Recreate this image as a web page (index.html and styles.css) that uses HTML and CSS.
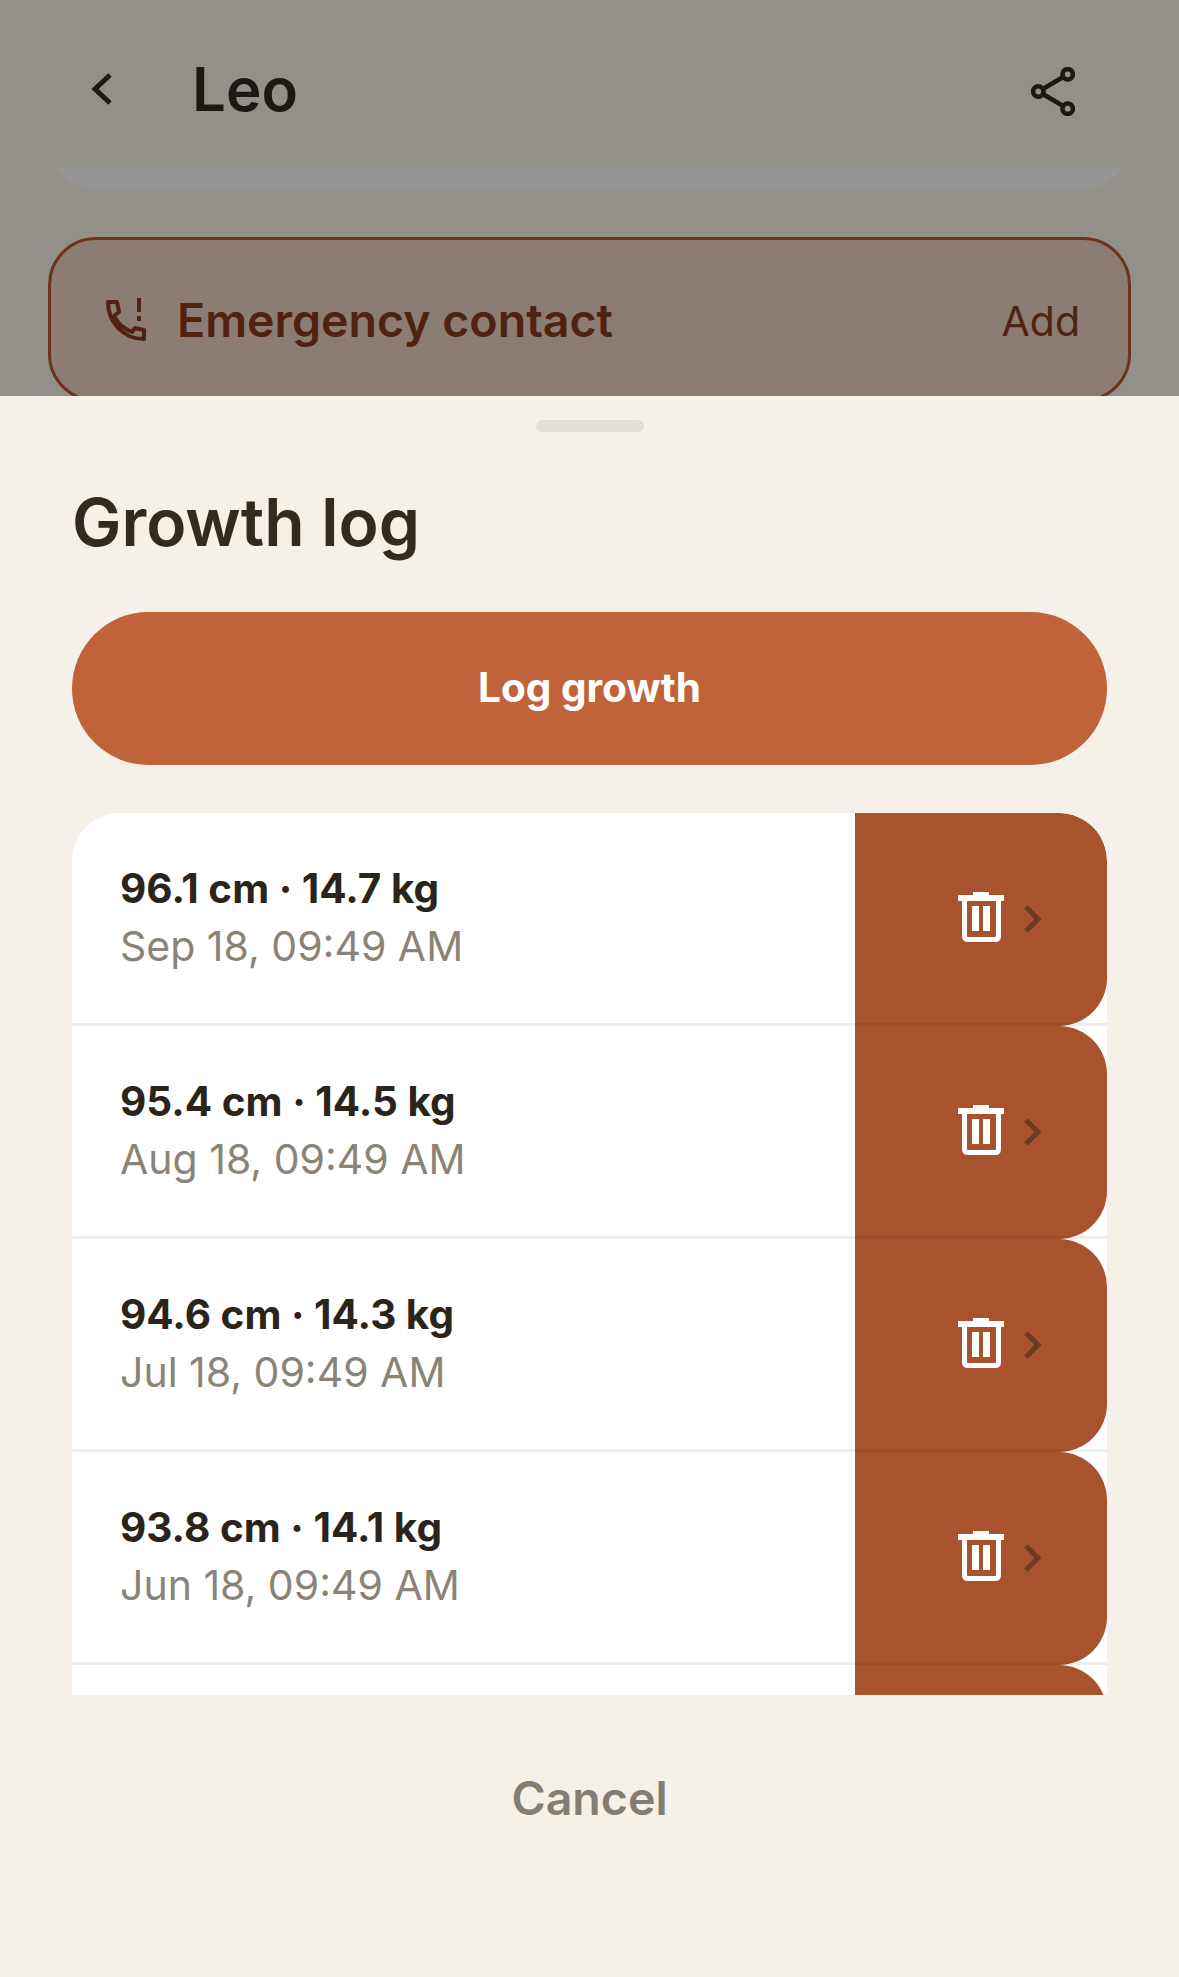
FILE: index.html
```html
<!DOCTYPE html>
<html>
<head>
  <meta charset="UTF-8" />
  <title>Growth log</title>
  <link rel="stylesheet" href="styles.css">
</head>
<body>

  <!-- Profile page behind the sheet -->
  <div class="page">
    <div class="top-bar">
      <svg class="back-icon" viewBox="0 0 24 36"><path d="M20 4 L5 18 L20 32" /></svg>
      <div class="page-title">Leo</div>
      <svg class="share-icon" viewBox="0 0 44 49">
        <path d="M11 22.5 L33 9.5 M11 26.5 L33 39.5" />
        <circle cx="7.3" cy="24.5" r="5.2" />
        <circle cx="36.7" cy="7.3" r="5.2" />
        <circle cx="36.7" cy="41.7" r="5.2" />
      </svg>
    </div>
    <div class="card-stub"></div>
    <div class="emergency">
      <svg class="phone-icon" viewBox="0 0 42 44">
        <path d="M3 4 H12 L14 14 L9 18 C13 26 19 31 27 34 L30 30 L39 32 V41 C18 41 3 24 3 4 Z" />
        <path class="mark" d="M34 0 V14 M34 18 V23" />
      </svg>
      <div class="emergency-label">Emergency contact</div>
      <div class="emergency-add">Add</div>
    </div>
  </div>

  <!-- Bottom sheet -->
  <div class="sheet">
    <div class="handle"></div>
    <h1>Growth log</h1>
    <button class="log-btn">Log growth</button>

    <div class="log-list">
      <div class="log-row">
        <div class="log-text">
          <div class="log-main">96.1 cm · 14.7 kg</div>
          <div class="log-date">Sep 18, 09:49 AM</div>
        </div>
        <div class="log-action">
          <svg class="trash-icon" viewBox="0 0 46 50"><path class="solid" d="M15 0 H31 V3 H46 V9 H0 V3 H15 Z M14 14 H21 V39 H14 Z M25 14 H32 V39 H25 Z" /><path class="line" d="M6.5 7 V44 Q6.5 47.5 10 47.5 H37 Q40.5 47.5 40.5 44 V7" /></svg>
          <svg class="chev-icon" viewBox="0 0 18 28"><path d="M2 2 L14 14 L2 26" /></svg>
        </div>
      </div>
      <div class="log-row">
        <div class="log-text">
          <div class="log-main">95.4 cm · 14.5 kg</div>
          <div class="log-date">Aug 18, 09:49 AM</div>
        </div>
        <div class="log-action">
          <svg class="trash-icon" viewBox="0 0 46 50"><path class="solid" d="M15 0 H31 V3 H46 V9 H0 V3 H15 Z M14 14 H21 V39 H14 Z M25 14 H32 V39 H25 Z" /><path class="line" d="M6.5 7 V44 Q6.5 47.5 10 47.5 H37 Q40.5 47.5 40.5 44 V7" /></svg>
          <svg class="chev-icon" viewBox="0 0 18 28"><path d="M2 2 L14 14 L2 26" /></svg>
        </div>
      </div>
      <div class="log-row">
        <div class="log-text">
          <div class="log-main">94.6 cm · 14.3 kg</div>
          <div class="log-date">Jul 18, 09:49 AM</div>
        </div>
        <div class="log-action">
          <svg class="trash-icon" viewBox="0 0 46 50"><path class="solid" d="M15 0 H31 V3 H46 V9 H0 V3 H15 Z M14 14 H21 V39 H14 Z M25 14 H32 V39 H25 Z" /><path class="line" d="M6.5 7 V44 Q6.5 47.5 10 47.5 H37 Q40.5 47.5 40.5 44 V7" /></svg>
          <svg class="chev-icon" viewBox="0 0 18 28"><path d="M2 2 L14 14 L2 26" /></svg>
        </div>
      </div>
      <div class="log-row">
        <div class="log-text">
          <div class="log-main">93.8 cm · 14.1 kg</div>
          <div class="log-date">Jun 18, 09:49 AM</div>
        </div>
        <div class="log-action">
          <svg class="trash-icon" viewBox="0 0 46 50"><path class="solid" d="M15 0 H31 V3 H46 V9 H0 V3 H15 Z M14 14 H21 V39 H14 Z M25 14 H32 V39 H25 Z" /><path class="line" d="M6.5 7 V44 Q6.5 47.5 10 47.5 H37 Q40.5 47.5 40.5 44 V7" /></svg>
          <svg class="chev-icon" viewBox="0 0 18 28"><path d="M2 2 L14 14 L2 26" /></svg>
        </div>
      </div>
      <div class="log-row">
        <div class="log-text"></div>
        <div class="log-action"></div>
      </div>
    </div>

    <div class="cancel">Cancel</div>
  </div>

</body>
</html>
```

FILE: styles.css
```css
* {
  box-sizing: border-box;
}
html, body {
  height: 100%;
}
body {
  font-family: Inter, "Liberation Sans", sans-serif;
  margin: 0;
  background: #93908a;
  position: relative;
  overflow: hidden;
}

/* page behind the sheet */
.page {
  padding: 0 48px;
}
.top-bar {
  height: 168px;
  display: flex;
  align-items: center;
  padding: 14px 56px 0 42px;
}
.back-icon {
  width: 24px;
  height: 36px;
  margin-top: -4px;
  fill: none;
  stroke: #1c1813;
  stroke-width: 5;
}
.page-title {
  margin: -5px 0 0 78px;
  font-size: 60px;
  font-weight: 600;
  color: #1c1813;
  flex: 1;
}
.share-icon {
  width: 44px;
  height: 49px;
  fill: none;
  stroke: #1c1813;
  stroke-width: 4.6;
}
.card-stub {
  height: 21px;
  overflow: hidden;
}
.card-stub::before {
  content: "";
  display: block;
  height: 69px;
  margin-top: -48px;
  background: #959595;
  border-radius: 0 0 48px 48px;
}
.emergency {
  margin-top: 48px;
  height: 165px;
  border: 3px solid #6f3318;
  border-radius: 48px;
  background: #8c7c72;
  display: flex;
  align-items: center;
  padding: 0 48px 0 54px;
  color: #4f2310;
}
.phone-icon {
  width: 42px;
  height: 44px;
  fill: none;
  stroke: #4f2310;
  stroke-width: 4;
  stroke-linejoin: round;
}
.emergency-label {
  margin-left: 30px;
  font-size: 46.5px;
  font-weight: 600;
  flex: 1;
}
.emergency-add {
  margin-top: 3px;
  font-size: 41px;
}

/* bottom sheet */
.sheet {
  position: absolute;
  left: 0;
  right: 0;
  top: 396px;
  bottom: 0;
  background: #f5f0e8;
  padding: 24px 72px 0 72px;
  overflow: hidden;
}
.handle {
  width: 108px;
  height: 12px;
  margin: 0 auto;
  border-radius: 6px;
  background: #e3dfd8;
}
h1 {
  margin: 50px 0 0 0;
  font-size: 66px;
  line-height: 80px;
  font-weight: 600;
  color: #332b20;
}
.log-btn {
  display: block;
  width: 100%;
  height: 153px;
  margin-top: 50px;
  padding-bottom: 4px;
  border: none;
  border-radius: 77px;
  background: #c0633a;
  color: #fff;
  font-family: inherit;
  font-size: 40.5px;
  font-weight: 700;
}
.log-list {
  margin-top: 48px;
  height: 882px;
  overflow: hidden;
  border-radius: 48px 48px 0 0;
  background: #fff;
}
.log-row {
  height: 213px;
  display: flex;
  position: relative;
}
.log-row::after {
  content: "";
  position: absolute;
  left: 0;
  right: 0;
  bottom: 0;
  height: 3px;
  background: rgba(0, 0, 0, 0.07);
}
.log-text {
  flex: 1;
  padding: 51px 0 0 48px;
}
.log-main {
  font-size: 40.5px;
  line-height: 50px;
  font-weight: 700;
  color: #2b241b;
}
.log-date {
  margin-top: 7px;
  font-size: 41px;
  line-height: 50px;
  color: #8a8478;
}
.log-action {
  width: 252px;
  flex-shrink: 0;
  background: #a8532d;
  border-radius: 0 48px 48px 0;
  display: flex;
  align-items: center;
  padding: 0 0 2px 103px;
  gap: 20px;
}
.trash-icon {
  width: 46px;
  height: 50px;
  margin-top: -4px;
}
.trash-icon .solid {
  fill: #fff;
}
.trash-icon .line {
  fill: none;
  stroke: #fff;
  stroke-width: 5;
}
.chev-icon {
  width: 18px;
  height: 28px;
  fill: none;
  stroke: #6b3c22;
  stroke-width: 5;
}
.cancel {
  margin-top: 75px;
  text-align: center;
  font-size: 46.5px;
  font-weight: 600;
  color: #847e72;
}
```
